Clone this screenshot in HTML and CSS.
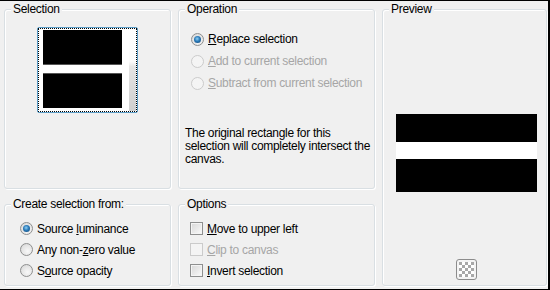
FILE: index.html
```html
<!DOCTYPE html>
<html lang="en">
<head>
  <meta charset="UTF-8" />
  <title>Selection from mask</title>
  <link rel="stylesheet" href="styles.css">
</head>
<body>
  <div class="dialog">
    <section class="group selection">
      <div class="group-title">Selection</div>
      <div class="thumb">
        <div class="thumb-focus">
          <div class="thumb-img">
            <div class="band black b1"></div>
            <div class="band white"></div>
            <div class="band black b2"></div>
          </div>
          <div class="thumb-strip"></div>
        </div>
      </div>
    </section>

    <section class="group operation">
      <div class="group-title">Operation</div>
      <div class="choices op-choices">
        <label class="choice"><span class="radio checked"></span><span><u>R</u>eplace selection</span></label>
        <label class="choice disabled"><span class="radio"></span><span><u>A</u>dd to current selection</span></label>
        <label class="choice disabled"><span class="radio"></span><span><u>S</u>ubtract from current selection</span></label>
      </div>
      <p class="note">The original rectangle for this selection will completely intersect the canvas.</p>
    </section>

    <section class="group preview">
      <div class="group-title">Preview</div>
      <div class="preview-img">
        <div class="band black p1"></div>
        <div class="band white p2"></div>
        <div class="band black p3"></div>
      </div>
      <svg class="checker" width="21" height="21" viewBox="0 0 21 21">
        <rect x="0.5" y="0.5" width="20" height="20" rx="2.5" fill="#f4f4f4" stroke="#8c8c8c"/>
        <rect x="3" y="3" width="15" height="15" fill="#fff"/>
        <g fill="#a8a8a8">
          <rect x="3" y="3" width="3" height="3"/><rect x="9" y="3" width="3" height="3"/><rect x="15" y="3" width="3" height="3"/>
          <rect x="6" y="6" width="3" height="3"/><rect x="12" y="6" width="3" height="3"/>
          <rect x="3" y="9" width="3" height="3"/><rect x="9" y="9" width="3" height="3"/><rect x="15" y="9" width="3" height="3"/>
          <rect x="6" y="12" width="3" height="3"/><rect x="12" y="12" width="3" height="3"/>
          <rect x="3" y="15" width="3" height="3"/><rect x="9" y="15" width="3" height="3"/><rect x="15" y="15" width="3" height="3"/>
        </g>
      </svg>
    </section>

    <section class="group source">
      <div class="group-title">Create selection from:</div>
      <div class="choices small-choices src-choices">
        <label class="choice"><span class="radio checked"></span><span>Source <u>l</u>uminance</span></label>
        <label class="choice"><span class="radio"></span><span>Any non-<u>z</u>ero value</span></label>
        <label class="choice"><span class="radio"></span><span>S<u>o</u>urce opacity</span></label>
      </div>
    </section>

    <section class="group options">
      <div class="group-title">Options</div>
      <div class="choices small-choices opt-choices">
        <label class="choice"><span class="check"></span><span><u>M</u>ove to upper left</span></label>
        <label class="choice disabled"><span class="check"></span><span><u>C</u>lip to canvas</span></label>
        <label class="choice"><span class="check"></span><span><u>I</u>nvert selection</span></label>
      </div>
    </section>
  </div>
</body>
</html>
```

FILE: styles.css
```css
body {
  margin: 0;
  padding: 0;
  font-family: 'Liberation Sans', Arial, sans-serif;
  font-size: 12px;
  letter-spacing: -0.3px;
  color: #000;
}
.dialog {
  width: 550px;
  height: 290px;
  box-sizing: border-box;
  background: #f0f0f0;
  border-top: 1px solid #000;
  border-right: 2px solid #000;
  border-bottom: 1px solid #000;
  padding: 8px 1px 3px 4px;
  display: grid;
  grid-template-columns: 167px 197px 165px;
  grid-template-rows: 180px 82px;
  column-gap: 7px;
  row-gap: 15px;
}
.group {
  border: 1px solid #d9dfe3;
  border-radius: 3px;
  box-shadow: inset 1px 1px 0 #fff, 1px 1px 0 #fff;
  min-width: 0;
}
.group-title {
  width: fit-content;
  margin: -8px 0 0 6px;
  padding: 0 2px;
  line-height: 14px;
  background: #f0f0f0;
}
.preview {
  grid-column: 3;
  grid-row: 1 / span 2;
}
.source { grid-column: 1; grid-row: 2; }
.options { grid-column: 2; grid-row: 2; }

/* selection thumbnail */
.thumb {
  width: 101px;
  height: 86px;
  box-sizing: border-box;
  margin: 11px auto 0;
  border: 1px solid #5a9cc6;
  border-radius: 2px;
  background: #fff;
}
.thumb-focus {
  height: 100%;
  box-sizing: border-box;
  border: 1px dotted #000;
  display: flex;
  padding: 1px 0 0 4px;
}
.thumb-img {
  width: 79px;
}
.thumb-strip {
  width: 13px;
  margin-left: auto;
  margin-top: -1px;
  background:
    linear-gradient(to right, #fff 6px, transparent 6px),
    linear-gradient(#fff 0, #fbfbfb 40%, #e4e4e4 46%, #cfcfcf 100%);
}
.band.black { background: #000; }
.band.white { background: #fff; }
.b1 { height: 34px; border-bottom: 1px solid #555; }
.thumb-img .white { height: 8px; }
.b2 { height: 34px; border-top: 1px solid #555; }

/* radio / checkbox rows */
.choices {
  display: flex;
  flex-direction: column;
}
.op-choices {
  margin-top: 12px;
  padding-left: 12px;
}
.op-choices .choice { height: 22px; }
.small-choices { margin-top: 7px; }
.small-choices .choice { height: 21px; }
.src-choices { padding-left: 15px; }
.opt-choices { padding-left: 11px; }
.choice {
  display: flex;
  align-items: center;
  gap: 4px;
}
.choice.disabled { color: #a6a6a6; }
.radio {
  width: 13px;
  height: 13px;
  box-sizing: border-box;
  border-radius: 50%;
  border: 1px solid #8e8f8f;
  background: radial-gradient(circle at 60% 65%, #f8f8f8 0, #e3e3e3 60%, #d0d0d0 100%);
  position: relative;
  flex: none;
}
.radio.checked::after {
  content: "";
  position: absolute;
  left: 2px;
  top: 2px;
  width: 7px;
  height: 7px;
  border-radius: 50%;
  background: radial-gradient(circle at 45% 40%, #8fd0f5 0, #2a7ab8 45%, #0e3f6e 100%);
}
.disabled .radio {
  border-color: #cbcbcb;
  background: #f4f4f4;
}
.check {
  width: 13px;
  height: 13px;
  box-sizing: border-box;
  border: 1px solid #8e8f8f;
  background: linear-gradient(135deg, #d7d7d7 0, #ececec 60%, #fafafa 100%);
  box-shadow: inset 0 0 0 1px #f4f4f4;
  flex: none;
}
.disabled .check {
  border-color: #cbcbcb;
  background: #f4f4f4;
}
.note {
  margin: 33px 0 0 6px;
  width: 188px;
  line-height: 13px;
}

/* preview */
.preview-img {
  width: 141px;
  margin: 98px 0 0 13px;
}
.p1 { height: 28px; }
.p2 { height: 17px; }
.p3 { height: 33px; }
.checker {
  display: block;
  margin: 67px 0 0 73px;
}
```
